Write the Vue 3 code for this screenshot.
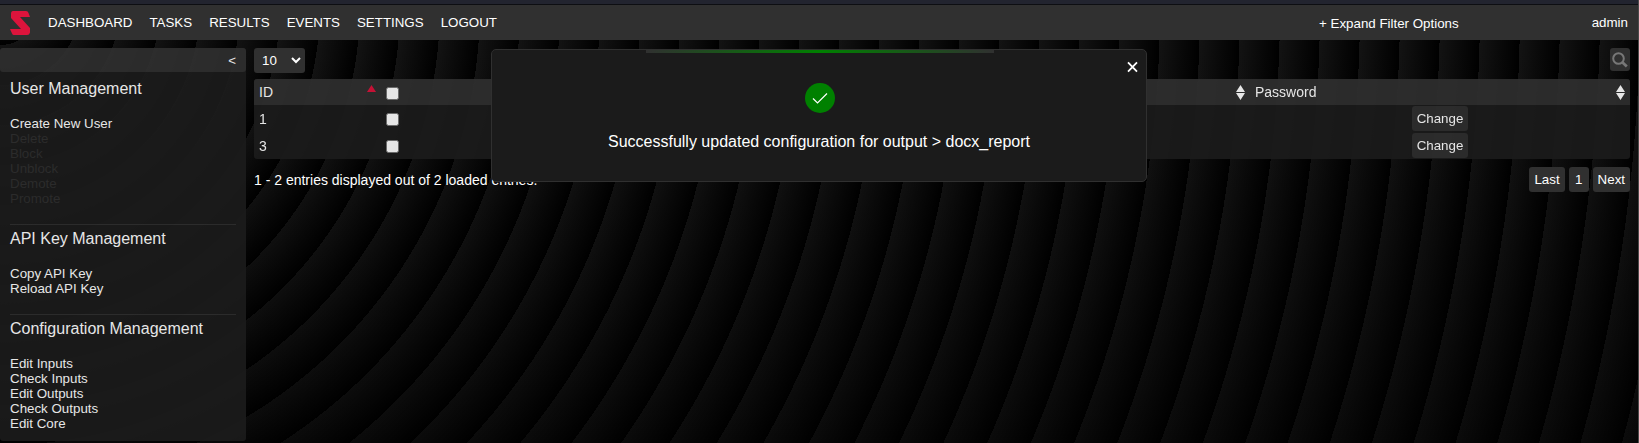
<script setup>
const nav = ['DASHBOARD', 'TASKS', 'RESULTS', 'EVENTS', 'SETTINGS', 'LOGOUT']
const groups = [
  {
    title: 'User Management',
    items: ['Create New User', 'Delete', 'Block', 'Unblock', 'Demote', 'Promote'],
    disabledFrom: 1,
  },
  { title: 'API Key Management', items: ['Copy API Key', 'Reload API Key'], disabledFrom: 99 },
  {
    title: 'Configuration Management',
    items: ['Edit Inputs', 'Check Inputs', 'Edit Outputs', 'Check Outputs', 'Edit Core'],
    disabledFrom: 99,
  },
]
const rows = [1, 3]
const pages = ['Last', '1', 'Next']
</script>

<template>
  <div class="page">
    <div class="strip"></div>
    <header class="topbar">
      <svg class="logo" width="20" height="24" viewBox="0 0 20 24">
        <path fill="#dc143c" d="M3 0H16Q18 0 18.500 2L20 6H10L20 17V21.500Q19.500 24 17 24H4Q2.500 24 2 22.500L0 18H11L1 7V3Q1 0 3 0Z" />
      </svg>
      <nav class="nav">
        <a v-for="n in nav" :key="n">{{ n }}</a>
      </nav>
      <span class="filter">+ Expand Filter Options</span>
      <span class="user">admin</span>
    </header>

    <div class="body">
      <aside class="side">
        <div class="collapse">&lt;</div>
        <section v-for="g in groups" :key="g.title" class="group">
          <h2>{{ g.title }}</h2>
          <ul>
            <li v-for="(it, i) in g.items" :key="it" :class="{ off: i >= g.disabledFrom }">{{ it }}</li>
          </ul>
        </section>
      </aside>

      <main class="main">
        <div class="tools">
          <div class="select">
            <span>10</span>
            <svg width="10" height="7" viewBox="0 0 10 7"><path d="M1 1L5 5L9 1" fill="none" stroke="#fff" stroke-width="2" /></svg>
          </div>
          <div class="search">
            <svg width="16" height="16" viewBox="0 0 16 16">
              <circle cx="6.500" cy="6.500" r="5.300" fill="none" stroke="#777" stroke-width="2" />
              <path d="M10.300 10.300L14.800 14.500" stroke="#777" stroke-width="2.800" />
            </svg>
          </div>
        </div>

        <div class="table">
          <div class="row head">
            <div class="cell">ID
              <svg class="asc" width="9" height="7" viewBox="0 0 9 7"><path d="M4.500 0L9 7H0Z" fill="#dc143c" /></svg>
            </div>
            <div class="cell tick"><i class="box"></i></div>
            <div class="cell last">
              <svg class="sort" width="9" height="15" viewBox="0 0 9 15"><path d="M4.500 0L9 7H0ZM4.500 15L9 8H0Z" fill="#fff" /></svg>
            </div>
            <div class="cell">Password
              <svg class="sort" width="9" height="15" viewBox="0 0 9 15"><path d="M4.500 0L9 7H0ZM4.500 15L9 8H0Z" fill="#fff" /></svg>
            </div>
          </div>
          <div v-for="r in rows" :key="r" class="row">
            <div class="cell">{{ r }}</div>
            <div class="cell tick"><i class="box"></i></div>
            <div class="cell"></div>
            <div class="cell center"><span class="btn change">Change</span></div>
          </div>
        </div>

        <div class="foot">
          <span class="info">1 - 2 entries displayed out of 2 loaded entries.</span>
          <div class="pager">
            <span v-for="p in pages" :key="p" class="btn">{{ p }}</span>
          </div>
        </div>
      </main>
    </div>

    <div class="modal">
      <div class="glow"></div>
      <svg class="close" width="11" height="12" viewBox="0 0 11 12"><path d="M1 1.300L10 10.700M10 1.300L1 10.700" stroke="#fff" stroke-width="1.800" /></svg>
      <svg class="ok" width="30" height="30" viewBox="0 0 30 30">
        <circle cx="15" cy="15" r="15" fill="#008000" />
        <path d="M8 15.500L12.500 20L22 10.500" fill="none" stroke="#fff" stroke-width="1.200" />
      </svg>
      <p>Successfully updated configuration for output &gt; docx_report</p>
    </div>
    <div class="edge"></div>
  </div>
</template>

<style>
html,
body {
  margin: 0;
  background: #000;
  overflow: hidden;
}
</style>

<style scoped>
* {
  box-sizing: border-box;
}
.page {
  position: relative;
  width: 1639px;
  height: 443px;
  overflow: hidden;
  font: 13.333px/15px "Liberation Sans", Arial, sans-serif;
  color: #fff;
  background:
    repeating-radial-gradient(circle at 0 5px, transparent 0, #000 40px),
    linear-gradient(#141414 0, #121212 100px, #0b0b0b 443px);
}
.strip {
  height: 5px;
  background: #22242f;
  border-bottom: 1px solid #0d0e12;
}
.topbar {
  height: 35px;
  display: flex;
  align-items: center;
  padding: 0 11px 0 10px;
  background: #303030;
}
.logo {
  margin-top: 1px;
}
.nav {
  display: flex;
  gap: 17px;
  margin-left: 18px;
  flex: 1;
}
.filter {
  margin: 2px 133px 0 0;
}
.body {
  display: flex;
  gap: 8px;
  padding: 8px 9px 0 0;
}
.side {
  width: 246px;
  height: 393px;
  background: #1c1c1c;
  opacity: 0.9;
  border-radius: 3px;
}
.collapse {
  height: 24px;
  padding: 5px 10px 0 0;
  text-align: right;
  background: #303030;
  border-radius: 3px;
}
.group {
  margin: 0 10px;
  height: 90px;
  border-top: 1px solid #303030;
  padding-top: 5px;
}
.group:nth-of-type(1) {
  height: 152px;
  border-top: 0;
  padding-top: 8px;
}
h2 {
  margin: 0;
  font-size: 16px;
  font-weight: 400;
  line-height: 18px;
}
ul {
  list-style: none;
  margin: 18px 0 0;
  padding: 0;
}
.off {
  color: #303030;
}
.main {
  flex: 1;
}
.tools {
  display: flex;
  justify-content: space-between;
  height: 31px;
}
.select {
  width: 51px;
  height: 25px;
  padding: 0 4px 0 8px;
  display: flex;
  align-items: center;
  justify-content: space-between;
  background: #303030;
  border-radius: 3px;
}
.search {
  width: 20px;
  height: 23px;
  display: grid;
  place-items: center;
  background: #303030;
  border-radius: 3px;
}
.table {
  font-size: 14px;
  line-height: 16px;
  background: #1c1c1c;
  opacity: 0.9;
  border-radius: 3px;
  overflow: hidden;
}
.row {
  display: grid;
  grid-template-columns: 127px 24px 1fr 380px;
  height: 27px;
}
.head {
  height: 26px;
  background: #303030;
}
.cell {
  display: flex;
  align-items: center;
  justify-content: space-between;
  padding: 0 5px;
}
.cell.center {
  justify-content: center;
}
.cell.last {
  justify-content: flex-end;
}
.asc {
  margin-bottom: 7px;
}
.sort {
  margin-top: 1px;
}
.box {
  width: 13px;
  height: 13px;
  margin-top: 2px;
  background: #fff;
  border: 1px solid #767676;
  border-radius: 2.500px;
}
.btn {
  font-size: 13.333px;
  line-height: 25px;
  height: 25px;
  padding: 0 5px;
  background: #303030;
  border-radius: 3px;
}
.foot {
  display: flex;
  justify-content: space-between;
  padding-top: 8px;
}
.info {
  font-size: 14px;
  line-height: 26px;
}
.pager {
  display: flex;
  gap: 4px;
}
.pager .btn {
  min-width: 20px;
  text-align: center;
}
.modal {
  position: absolute;
  left: 491px;
  top: 49px;
  width: 656px;
  height: 133px;
  background: #1b1b1b;
  border: 1px solid #303030;
  border-radius: 5px;
  display: flex;
  flex-direction: column;
  align-items: center;
  font-size: 16px;
}
.glow {
  width: 348px;
  height: 3px;
  margin-left: 2px;
  background: linear-gradient(90deg, #303030, #008000, #303030);
}
.close {
  position: absolute;
  right: 8px;
  top: 11px;
}
.ok {
  margin: 30px 0 0 2px;
}
p {
  margin: 20px 0 0;
  line-height: 18px;
}
.edge {
  position: absolute;
  right: 0;
  top: 0;
  width: 1px;
  height: 443px;
  background: #4a4a4a;
}
</style>
